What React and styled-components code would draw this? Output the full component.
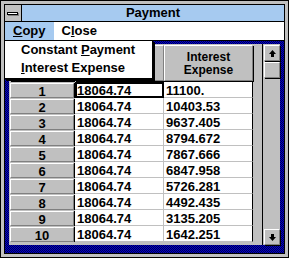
import React from 'react';
import styled, { createGlobalStyle } from 'styled-components';

const Global = createGlobalStyle`
  html, body { margin: 0; padding: 0; background: #ffffff; }
  body { font-family: "Liberation Sans", Arial, sans-serif; }
`;

const Window = styled.div`
  width: 289px;
  height: 258px;
  box-sizing: border-box;
  background: #c0c0c0;
  border: 1px solid #000;
  padding: 3px;
  display: flex;
`;

const Inner = styled.div`
  flex: 1;
  min-width: 0;
  border: 1px solid #000;
  display: flex;
  flex-direction: column;
`;

const TitleBar = styled.div`
  height: 16px;
  display: flex;
  border-bottom: 1px solid #000;
`;

const SysBox = styled.div`
  width: 17px;
  box-sizing: border-box;
  border-right: 1px solid #000;
  background: #c0c0c0;
  display: flex;
  align-items: center;
  justify-content: center;
`;

const SysDash = styled.span`
  width: 9px;
  height: 1px;
  background: #fff;
  border: 1px solid #000;
  box-shadow: 1px 1px 0 #808080;
  margin-right: 1px;
`;

const Title = styled.div`
  flex: 1;
  background: #a6caf0;
  color: #000;
  font-weight: bold;
  font-size: 13px;
  line-height: 16px;
  text-align: center;
`;

const MenuBar = styled.div`
  height: 18px;
  display: flex;
  background: #fff;
  border-bottom: 1px solid #000;
`;

const MenuItem = styled.div`
  position: relative;
  padding: 0 8px;
  font-size: 13px;
  font-weight: bold;
  line-height: 18px;
  background: ${p => (p.$active ? '#a6caf0' : 'transparent')};
`;

const Dropdown = styled.div`
  position: absolute;
  left: -1px;
  top: 100%;
  width: 149px;
  box-sizing: border-box;
  background: #fff;
  border: 1px solid #000;
  box-shadow: 2px 2px 0 #000;
  padding: 0 0 1px;
  z-index: 5;
`;

const DropItem = styled.div`
  padding-left: 16px;
  font-size: 13px;
  font-weight: bold;
  line-height: 18px;
  white-space: nowrap;
`;

const Client = styled.div`
  flex: 1;
  display: flex;
  padding: 3px 4px 8px 4px;
  background-color: #000080;
  background-image: repeating-conic-gradient(#0000c8 0% 25%, #000050 0% 50%);
  background-size: 2px 2px;
`;

const Grid = styled.div`
  flex: 1;
  display: flex;
  background: #c0c0c0;
`;

const Table = styled.div`
  display: grid;
  grid-template-columns: 66px 89px 89px;
  grid-template-rows: 38px repeat(10, 16px);
  align-content: start;
`;

const HeadCell = styled.div`
  box-sizing: border-box;
  margin: 1px ${p => (p.$corner ? '1px' : '0')} 1px ${p => (p.$corner ? '1px' : '0')};
  padding-top: 2px;
  border-top: 1px solid #fff;
  border-left: 1px solid #fff;
  border-right: 1px solid #808080;
  border-bottom: 1px solid #808080;
  box-shadow: 1px 1px 0 #000;
  background: #c0c0c0;
  display: flex;
  align-items: center;
  justify-content: center;
  text-align: center;
  font-size: 12px;
  font-weight: bold;
  line-height: 13px;
`;

const RowHead = styled.div`
  box-sizing: border-box;
  margin: 1px 1px 0 1px;
  border-top: 1px solid #fff;
  border-left: 1px solid #fff;
  border-bottom: 1px solid #808080;
  border-right: 1px solid #808080;
  background: #c0c0c0;
  font-size: 13px;
  font-weight: bold;
  line-height: 16px;
  text-align: center;
  box-shadow: 1px 0 0 #000;
  overflow: visible;
`;

const DataCell = styled.div`
  box-sizing: border-box;
  background: #fff;
  border-bottom: 1px solid #c0c0c0;
  border-right: 1px solid ${p => (p.$last ? '#000' : '#c0c0c0')};
  font-size: 13px;
  font-weight: bold;
  line-height: 17px;
  padding-left: 2px;
  outline: ${p => (p.$focus ? '2px solid #000' : 'none')};
  outline-offset: -2px;
`;

const Gutter = styled.div`
  width: 9px;
`;

const ScrollBar = styled.div`
  width: 18px;
  box-sizing: border-box;
  border-left: 1px solid #000;
  padding: 1px 0 0 1px;
  display: flex;
  flex-direction: column;
  gap: 1px;
`;

const ScrollBtn = styled.div`
  width: 16px;
  height: 16px;
  box-sizing: border-box;
  border-top: 1px solid #fff;
  border-left: 1px solid #fff;
  border-right: 1px solid #808080;
  border-bottom: 1px solid #808080;
  box-shadow: 1px 1px 0 #000;
  background: #c0c0c0;
  display: flex;
  align-items: center;
  justify-content: center;
  margin-top: ${p => (p.$bottom ? 'auto' : '0')};
`;

const Arrow = ({ down }) => (
  <svg width="7" height="7" viewBox="0 0 7 7" style={{ transform: down ? 'rotate(180deg)' : 'none' }}>
    <path d="M3.5 0 L7 4 L5 4 L5 7 L2 7 L2 4 L0 4 Z" fill="#000" />
  </svg>
);

const rows = [
  ['18064.74', '11100.'],
  ['18064.74', '10403.53'],
  ['18064.74', '9637.405'],
  ['18064.74', '8794.672'],
  ['18064.74', '7867.666'],
  ['18064.74', '6847.958'],
  ['18064.74', '5726.281'],
  ['18064.74', '4492.435'],
  ['18064.74', '3135.205'],
  ['18064.74', '1642.251'],
];

export default function App() {
  return (
    <>
      <Global />
      <Window>
        <Inner>
          <TitleBar>
            <SysBox><SysDash /></SysBox>
            <Title>Payment</Title>
          </TitleBar>
          <MenuBar>
            <MenuItem $active>
              <u>C</u>opy
              <Dropdown>
                <DropItem>Constant <u>P</u>ayment</DropItem>
                <DropItem><u>I</u>nterest Expense</DropItem>
              </Dropdown>
            </MenuItem>
            <MenuItem>C<u>l</u>ose</MenuItem>
          </MenuBar>
          <Client>
            <Grid>
              <Table>
                <HeadCell $corner />
                <HeadCell />
                <HeadCell>Interest<br />Expense</HeadCell>
                {rows.map((r, i) => (
                  <React.Fragment key={i}>
                    <RowHead>{i + 1}</RowHead>
                    <DataCell $focus={i === 0}>{r[0]}</DataCell>
                    <DataCell $last>{r[1]}</DataCell>
                  </React.Fragment>
                ))}
              </Table>
              <Gutter />
              <ScrollBar>
                <ScrollBtn><Arrow /></ScrollBtn>
                <ScrollBtn />
                <ScrollBtn $bottom><Arrow down /></ScrollBtn>
              </ScrollBar>
            </Grid>
          </Client>
        </Inner>
      </Window>
    </>
  );
}
